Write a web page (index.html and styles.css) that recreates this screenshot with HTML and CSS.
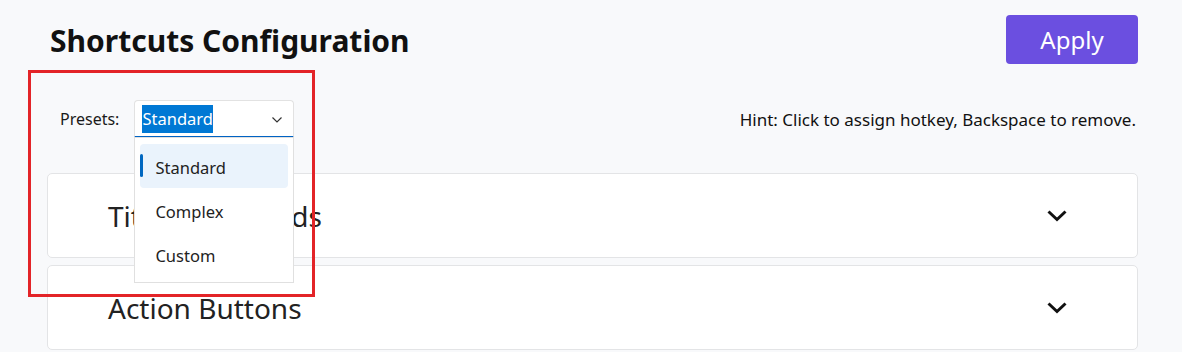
FILE: index.html
```html
<!DOCTYPE html>
<html>
<head>
<meta charset="utf-8">
<link rel="stylesheet" href="styles.css">
</head>
<body>
<div class="page">
  <header class="header">
    <h1 class="title">Shortcuts Configuration</h1>
    <button class="apply">Apply</button>
  </header>
  <div class="toolbar">
    <div class="presets">
      <span class="label">Presets:</span>
      <div class="select">
        <span class="value"><span class="sel">Standard</span></span>
        <svg class="caret" width="12" height="8" viewBox="0 0 12 8"><path d="M1.5 1.5 L6 6 L10.5 1.5" fill="none" stroke="#333" stroke-width="1.2"/></svg>
        <div class="menu">
          <div class="item active"><span class="bar"></span>Standard</div>
          <div class="item">Complex</div>
          <div class="item">Custom</div>
        </div>
      </div>
    </div>
    <div class="hint">Hint: Click to assign hotkey, Backspace to remove.</div>
  </div>
  <div class="cards">
    <div class="card">
      <span class="card-title">Title Commands</span>
      <svg class="chev" width="22" height="14" viewBox="0 0 22 14"><path d="M2.5 2.5 L11 10.5 L19.5 2.5" fill="none" stroke="#111" stroke-width="3"/></svg>
    </div>
    <div class="card">
      <span class="card-title">Action Buttons</span>
      <svg class="chev" width="22" height="14" viewBox="0 0 22 14"><path d="M2.5 2.5 L11 10.5 L19.5 2.5" fill="none" stroke="#111" stroke-width="3"/></svg>
    </div>
  </div>
  <div class="annot"></div>
</div>
</body>
</html>
```

FILE: styles.css
```css
* { box-sizing: border-box; }
html, body { margin: 0; padding: 0; }
body {
  background: #f8f9fb;
  font-family: "Noto Sans", "Open Sans", sans-serif;
  color: #1a1a1a;
  width: 1182px;
  height: 352px;
  overflow: hidden;
}
.page {
  position: relative;
  padding: 15px 44px 0 47px;
}
.header {
  display: flex;
  justify-content: space-between;
  align-items: flex-start;
  height: 50px;
}
.title {
  margin: 6px 0 0 3px;
  font-size: 30px;
  font-weight: 700;
  line-height: 40px;
  color: #111;
}
.apply {
  width: 132px;
  height: 49px;
  background: #6b4fe0;
  border: none;
  border-radius: 4px;
  color: #fff;
  font-family: inherit;
  font-size: 24px;
  font-weight: 400;
  padding: 0;
}
.toolbar {
  display: flex;
  justify-content: space-between;
  align-items: center;
  margin-top: 35px;
  height: 38px;
  padding-left: 13px;
  padding-right: 2px;
}
.presets {
  display: flex;
  align-items: center;
  gap: 15px;
}
.label {
  font-size: 16px;
  color: #1a1a1a;
}
.select {
  position: relative;
  width: 160px;
  height: 38px;
  background: #fff;
  border: 1px solid #e2e2e2;
  border-bottom: 2px solid #0063c4;
  border-radius: 4px 4px 0 0;
  display: flex;
  align-items: center;
  padding-left: 7px;
}
.value { font-size: 16.5px; }
.sel {
  background: #0078d4;
  color: #fff;
  padding: 2px 0 3px;
}
.caret {
  position: absolute;
  right: 10px;
  top: 15px;
}
.menu {
  position: absolute;
  top: 36px;
  left: -1px;
  width: 160px;
  height: 146px;
  background: #fff;
  border: 1px solid #e0e0e0;
  padding: 6px 5px;
  z-index: 5;
}
.item {
  position: relative;
  height: 44px;
  display: flex;
  align-items: center;
  padding: 3px 0 0 15px;
  font-size: 16.5px;
  color: #222;
  border-radius: 4px;
}
.item.active { background: #eaf3fc; }
.bar {
  position: absolute;
  left: 0;
  top: 10px;
  width: 3px;
  height: 23px;
  border-radius: 2px;
  background: #0067c0;
}
.hint {
  font-size: 17px;
  color: #111;
}
.cards {
  margin-top: 35px;
  display: flex;
  flex-direction: column;
  gap: 7px;
}
.card {
  height: 85px;
  background: #fff;
  border: 1px solid #e3e4e6;
  border-radius: 5px;
  display: flex;
  align-items: center;
  justify-content: space-between;
  padding: 0 69px 0 60px;
}
.card-title {
  font-size: 28px;
  color: #222;
}
.annot {
  position: absolute;
  left: 28px;
  top: 70px;
  width: 287px;
  height: 227px;
  border: 3px solid #e32428;
  z-index: 10;
}
```
